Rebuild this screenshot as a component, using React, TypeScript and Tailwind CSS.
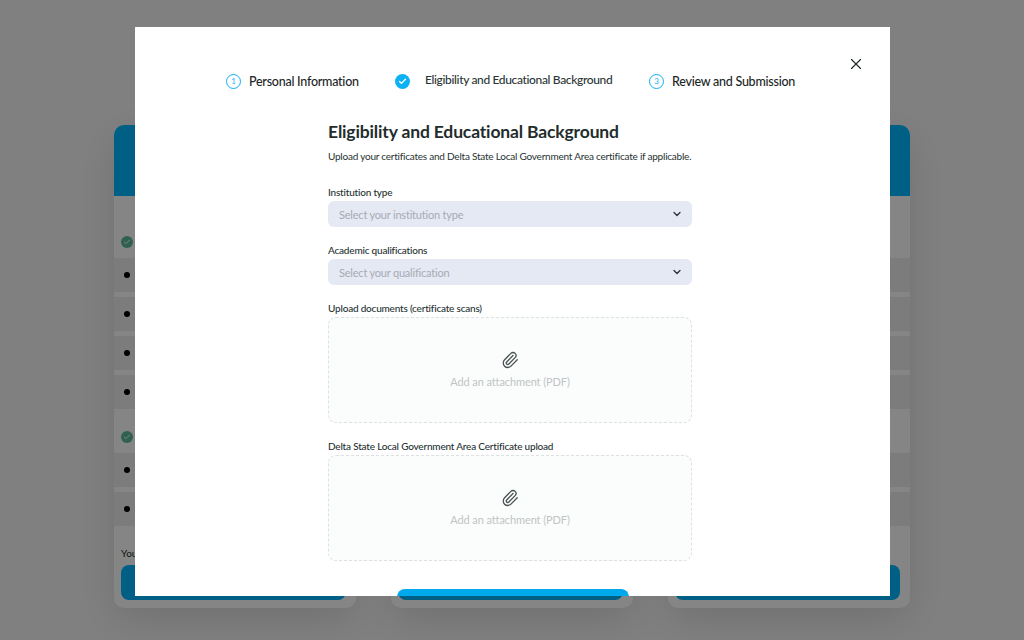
import { Check, ChevronDown, Paperclip, X } from "lucide-react";

const FONT = "font-['Lato','Noto_Sans',sans-serif]";

function Bullet() {
  return <span className="ml-[10px] block h-[6px] w-[6px] rounded-full bg-black" />;
}

function Row() {
  return (
    <div className="flex h-[34px] items-center bg-[#eeeeee]">
      <Bullet />
    </div>
  );
}

function SectionHead({ height }: { height: string }) {
  return (
    <div className={`flex items-end pb-[10px] pl-[7px] ${height}`}>
      <span className="flex h-[12px] w-[12px] items-center justify-center rounded-full bg-[#5cb89a]">
        <Check size={8} strokeWidth={3} className="text-white" />
      </span>
    </div>
  );
}

function PlanCard() {
  return (
    <div className="flex h-[483px] flex-col rounded-[10px] bg-white shadow-[0_12px_40px_rgba(0,0,0,0.12)]">
      <div className="h-[71px] rounded-t-[10px] bg-[#00b7ff]" />
      <SectionHead height="h-[62px]" />
      <div className="flex flex-col gap-[5px]">
        <Row />
        <Row />
        <Row />
        <Row />
      </div>
      <SectionHead height="h-[44px]" />
      <div className="flex flex-col gap-[5px]">
        <Row />
        <Row />
      </div>
      <p className="mt-[20px] pl-[7px] text-[10px] leading-[14px] text-[#1f2d2d]">You</p>
      <div className="ml-[7px] mt-[5px] h-[35px] w-[225px] rounded-[8px] bg-[#00b7ff]" />
    </div>
  );
}

function Step({ mark, label, className }: { mark: string; label: string; className: string }) {
  return (
    <div className={`flex items-center ${className}`}>
      <span className="flex h-[15px] w-[15px] items-center justify-center rounded-full border-[1.5px] border-[#0db1f5] text-[8px] leading-none text-[#0db1f5]">
        {mark}
      </span>
      <span className="ml-[8px] pt-[2px] text-[12.5px] font-medium leading-[16px] tracking-[-0.25px] text-[#1b2626]">
        {label}
      </span>
    </div>
  );
}

function SelectBox({ label, placeholder }: { label: string; placeholder: string }) {
  return (
    <div>
      <p className="text-[10px] font-medium leading-[14px] tracking-[-0.2px] text-[#263232]">{label}</p>
      <div className="mt-[2px] flex h-[26px] items-center justify-between rounded-[6px] bg-[#e4e9f4] pl-[11px] pr-[9px]">
        <span className="pt-[2px] text-[11px] leading-[14px] tracking-[-0.2px] text-[#a6abb3]">{placeholder}</span>
        <ChevronDown size={12} strokeWidth={2.5} className="text-[#263232]" />
      </div>
    </div>
  );
}

function UploadBox({ label }: { label: string }) {
  return (
    <div>
      <p className="text-[10px] font-medium leading-[14px] tracking-[-0.2px] text-[#263232]">{label}</p>
      <div className="mt-[2px] flex h-[106px] flex-col items-center justify-center rounded-[8px] border border-dashed border-[#dde1e1] bg-[#fbfdfd] pt-[1px]">
        <Paperclip size={18} strokeWidth={1.75} className="text-[#4a5252]" />
        <span className="mt-[5px] text-[11px] tracking-[-0.1px] text-[#bfc4c4]">Add an attachment (PDF)</span>
      </div>
    </div>
  );
}

export default function App() {
  return (
    <div className={`relative h-screen w-full overflow-hidden bg-[#f6f6f6] ${FONT}`}>
      <div className="grid grid-cols-[242px_242px_242px] gap-[35px] pl-[114px] pt-[125px]">
        <PlanCard />
        <PlanCard />
        <PlanCard />
      </div>

      <div className="fixed inset-0 bg-black/48">
        <div className="relative ml-[135px] mt-[27px] h-[569px] w-[755px] overflow-hidden bg-white">
          <button className="absolute right-[25px] top-[28px] text-[#1b2626]">
            <X size={18} strokeWidth={1.5} />
          </button>

          <div className="flex pl-[91px] pt-[45px]">
            <Step mark="1" label="Personal Information" className="w-[169px]" />
            <div className="flex w-[254px] items-center">
              <span className="flex h-[15px] w-[15px] items-center justify-center rounded-full bg-[#0db1f5]">
                <Check size={9} strokeWidth={3.5} className="text-white" />
              </span>
              <span className="ml-[15px] pb-[2px] text-[12px] font-medium leading-[16px] tracking-[-0.35px] text-[#2b3535]">
                Eligibility and Educational Background
              </span>
            </div>
            <Step mark="3" label="Review and Submission" className="" />
          </div>

          <div className="ml-[193px] mt-[29px] w-[364px]">
            <h2 className="text-[17.5px] font-bold leading-[26px] tracking-[-0.15px] text-[#1f2d2d]">
              Eligibility and Educational Background
            </h2>
            <p className="mt-[4px] whitespace-nowrap text-[10px] leading-[14px] tracking-[-0.225px] text-[#263232]">
              Upload your certificates and Delta State Local Government Area certificate if applicable.
            </p>
            <div className="mt-[22px] flex flex-col gap-[16px]">
              <SelectBox label="Institution type" placeholder="Select your institution type" />
              <SelectBox label="Academic qualifications" placeholder="Select your qualification" />
              <UploadBox label="Upload documents (certificate scans)" />
            </div>
            <div className="mt-[16px]">
              <UploadBox label="Delta State Local Government Area Certificate upload" />
            </div>
          </div>

          <div className="ml-[262px] mt-[28px] h-[36px] w-[232px] rounded-[8px] bg-[#00a8ec]" />
        </div>
      </div>
    </div>
  );
}
